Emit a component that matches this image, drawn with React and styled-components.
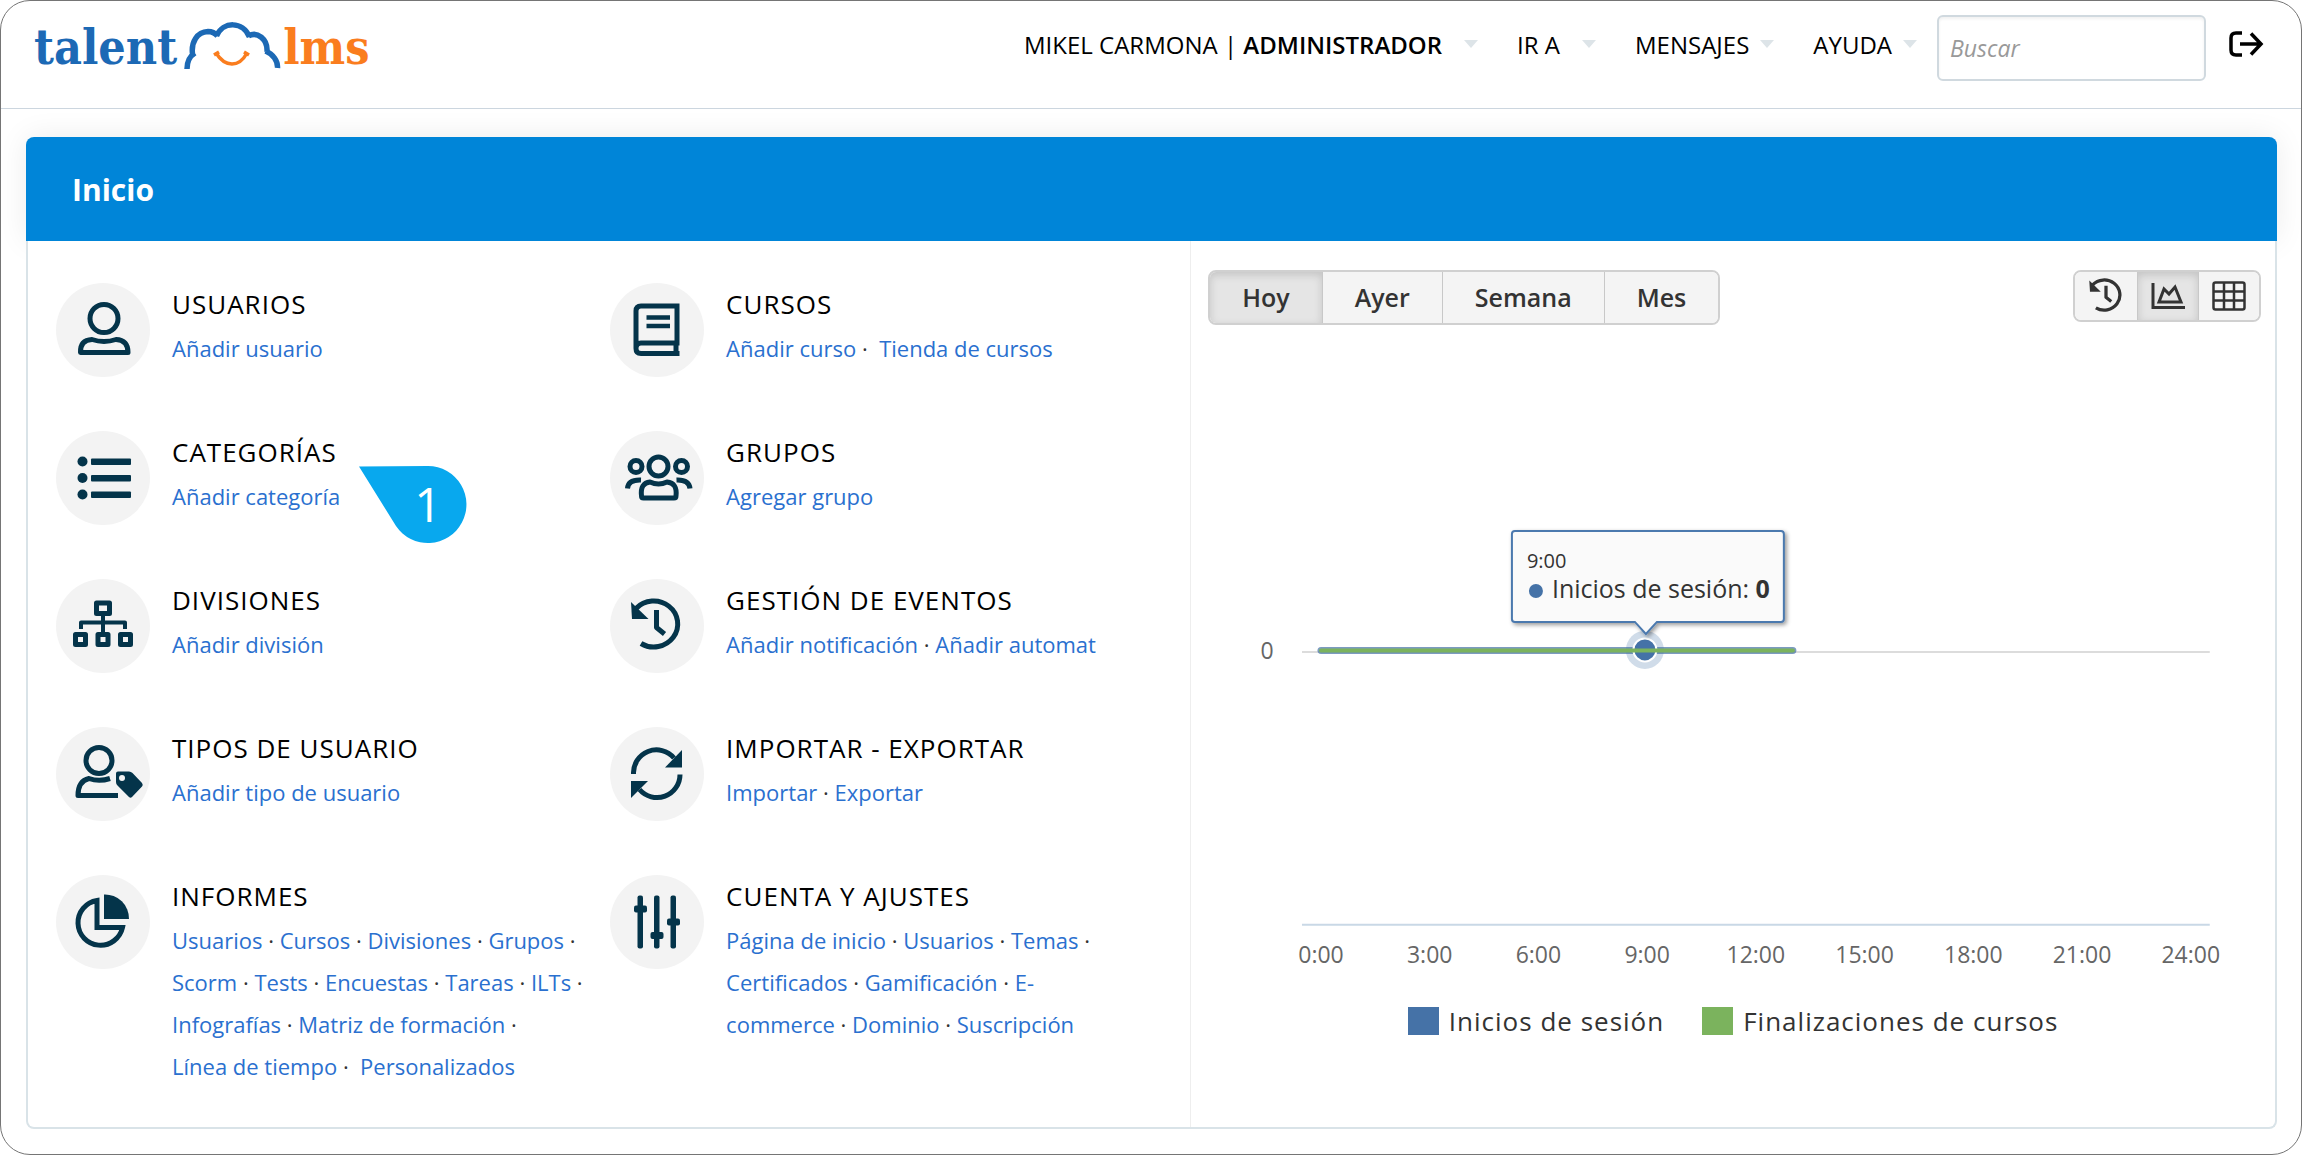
import React from 'react'
import styled, { createGlobalStyle } from 'styled-components'

const GlobalStyle = createGlobalStyle`
  * {
    box-sizing: border-box;
  }
  body {
    margin: 0;
    background: #ffffff;
    color: #333333;
    font-family: 'Open Sans', 'Noto Sans', sans-serif;
  }
  button, input {
    font-family: inherit;
  }
`

const Page = styled.div`
  display: flex;
  flex-direction: column;
  min-height: 100vh;
  border: 1px solid #757575;
  border-radius: 30px;
`

const TopBar = styled.header`
  display: flex;
  align-items: flex-start;
  justify-content: space-between;
  height: 108px;
  padding: 14px 37px 0 33px;
  border-bottom: 1px solid #ccd6df;
`

const Logo = styled.a`
  display: flex;
  align-items: flex-start;
  font-family: 'DejaVu Serif Condensed', 'DejaVu Serif', serif;
  font-size: 48px;
  font-weight: bold;
  line-height: 64px;
  color: #1c69b5;
  text-decoration: none;
`

const LogoCloud = styled.svg`
  width: 98px;
  height: 48px;
  margin: 7px 2px 0 6px;
`

const LogoAccent = styled.span`
  color: #fa7d1e;
`

const TopNav = styled.nav`
  display: flex;
  align-items: flex-start;
`

const NavButton = styled.button`
  display: flex;
  align-items: center;
  gap: ${props => (props.$tight ? '11px' : '22px')};
  height: 58px;
  margin-right: ${props => (props.$last ? '20px' : '39px')};
  padding: 0;
  border: 0;
  background: none;
  color: #000000;
  font-size: 24px;
  white-space: nowrap;
  cursor: pointer;
  strong {
    font-weight: 600;
  }
`

const Caret = styled.span`
  border: 7px solid transparent;
  border-top: 8px solid #dde4e8;
  border-bottom: 0;
`

const SearchInput = styled.input`
  width: 269px;
  height: 66px;
  padding: 0 11px;
  border: 2px solid #d0d9df;
  border-radius: 6px;
  box-shadow: inset 0 2px 3px rgba(0, 0, 0, 0.06);
  font-size: 23px;
  &::placeholder {
    color: #999999;
    font-style: italic;
  }
`

const IconButton = styled.button`
  display: flex;
  margin: 14px 0 0 22px;
  padding: 0;
  border: 0;
  background: none;
  cursor: pointer;
`

const Main = styled.main`
  flex: 1;
  padding: 28px 24px 24px 25px;
`

const Card = styled.section`
  border-radius: 8px;
`

const CardHeader = styled.div`
  display: flex;
  align-items: center;
  height: 104px;
  padding: 0 46px;
  background: #0085d8;
  border-radius: 8px 8px 0 0;
  box-shadow: 0 0 30px rgba(0, 0, 0, 0.08);
  h1 {
    margin: 0;
    color: #ffffff;
    font-size: 30px;
    font-weight: 700;
  }
`

const CardBody = styled.div`
  position: relative;
  display: grid;
  grid-template-columns: 15fr 14fr;
  background: #ffffff;
  border: 2px solid #d9e3e8;
  border-top: 0;
  border-radius: 0 0 8px 8px;
`

const ItemGrid = styled.div`
  display: grid;
  grid-template-columns: 1fr 1fr;
  padding: 42px 26px 40px 28px;
`

const ItemBox = styled.div`
  position: relative;
  display: flex;
  gap: 22px;
  min-height: 148px;
`

const ItemIcon = styled.div`
  display: flex;
  flex: none;
  align-items: center;
  justify-content: center;
  width: 94px;
  height: 94px;
  border-radius: 50%;
  background: #f3f3f3;
  color: #04344a;
`

const ItemText = styled.div`
  width: 418px;
  h2 {
    margin: 0 0 2px;
    color: #000000;
    font-size: 26px;
    font-weight: 500;
    line-height: 42px;
    letter-spacing: 1px;
    text-transform: uppercase;
  }
  p {
    margin: 0;
    font-size: 22px;
    line-height: 42px;
  }
  a {
    color: #2a70cf;
    text-decoration: none;
  }
`

const Callout = styled.svg`
  position: absolute;
  top: 34px;
  left: 302px;
  width: 110px;
  height: 80px;
`

const ChartPanel = styled.div`
  border-left: 1px solid #eeeeee;
`

const Toolbar = styled.div`
  display: flex;
  justify-content: space-between;
  padding: 29px 14px 0 17px;
`

const ButtonGroup = styled.div`
  display: flex;
  height: ${props => props.$height}px;
  border: 2px solid #d0d0d0;
  border-radius: 8px;
  overflow: hidden;
`

const GroupButton = styled.button`
  display: flex;
  align-items: center;
  justify-content: center;
  padding: ${props => (props.$icon ? '0 13px' : '0 32px 2px')};
  border: 0;
  background: ${props => (props.$active ? '#e5e5e5' : '#f4f4f4')};
  box-shadow: ${props => (props.$active ? 'inset 0 3px 8px rgba(0, 0, 0, 0.15)' : 'none')};
  color: #333333;
  font-size: 25px;
  font-weight: 600;
  cursor: pointer;
  & + & {
    border-left: 1px solid #c8c8c8;
  }
`

const ChartSvg = styled.svg`
  display: block;
  width: 100%;
  height: auto;
  font-family: 'Open Sans', 'Noto Sans', sans-serif;
`

const Legend = styled.ul`
  display: flex;
  justify-content: center;
  gap: 38px;
  margin: 0;
  padding: 24px 0 0;
  list-style: none;
`

const LegendItem = styled.li`
  display: flex;
  align-items: center;
  gap: 10px;
  color: #333333;
  font-size: 26px;
  line-height: 36px;
  letter-spacing: 1px;
  &::before {
    content: '';
    width: 31px;
    height: 28px;
    background: ${props => props.$color};
  }
`

const stroke = {
  fill: 'none',
  stroke: 'currentColor',
  strokeWidth: 5,
  strokeLinejoin: 'round',
}

// Every item icon is drawn in the 94x94 box of its circle
const Icon = ({ children }) => (
  <svg width="94" height="94" viewBox="0 0 94 94" aria-hidden="true">
    {children}
  </svg>
)

const HistoryShape = () => (
  <>
    <path {...stroke} d="M26 29.500A24 23 0 1 1 31 64.500" />
    <path d="M21 23L22 40H38.500Z" fill="currentColor" />
    <path {...stroke} d="M46.500 31V48.500L54.500 55" />
  </>
)

const icons = {
  user: (
    <Icon>
      <circle {...stroke} cx="48" cy="35.500" r="14" />
      <path {...stroke} d="M24.500 69.500Q24 57 36 56.500Q48 60.500 60 56.500Q72 57 72 69.500Z" />
    </Icon>
  ),
  course: (
    <Icon>
      <path {...stroke} strokeLinejoin="miter" d="M26 65V28Q26 23 31 23H67V60H31Q26 60 26 65.500Q26 70.500 31 70.500H69.500M66 60V70" />
      <path {...stroke} strokeWidth="4.500" d="M36.500 34.500H60M36.500 43H60" />
    </Icon>
  ),
  category: (
    <Icon>
      <g fill="currentColor">
        {[30.5, 47, 63.5].map(y => (
          <React.Fragment key={y}>
            <circle cx="26.500" cy={y} r="5" />
            <rect x="35" y={y - 3} width="40" height="6.500" rx="1" />
          </React.Fragment>
        ))}
      </g>
    </Icon>
  ),
  group: (
    <Icon>
      <circle {...stroke} cx="48.500" cy="35.500" r="9.500" />
      <circle {...stroke} cx="26" cy="35.500" r="6" />
      <circle {...stroke} cx="71.500" cy="35.500" r="6" />
      <path {...stroke} d="M31.500 65Q30 52 40 51Q48.500 55 57 51Q67.500 52 66 65Q66 67 64 67H33.500Q31.500 67 31.500 65Z" />
      <path {...stroke} d="M17.500 57.500Q18 48.500 31 49M80 57.500Q79 48.500 66.500 49" />
    </Icon>
  ),
  division: (
    <Icon>
      <g {...stroke}>
        <rect x="40.500" y="24" width="13" height="10.500" />
        <rect x="19.500" y="55.500" width="10" height="10" />
        <rect x="42" y="55.500" width="10" height="10" />
        <rect x="64.500" y="55.500" width="10" height="10" />
        <path strokeWidth="4" d="M47 35V53M25 50V43.500H69V50" />
      </g>
    </Icon>
  ),
  event: (
    <Icon>
      <HistoryShape />
    </Icon>
  ),
  userType: (
    <Icon>
      <circle {...stroke} cx="43" cy="33.500" r="13" />
      <path {...stroke} d="M54 51.500Q43 55 33 51.500Q22 54 22 68.500H62" />
      <path d="M60 46.500Q60 44.500 62 44.500H73Q75 44.500 76.500 46L86 56Q87.500 58 86 59.500L76 70Q74.500 71.500 73 70L61.500 58.500Q60 57 60 55Z" fill="currentColor" />
      <circle cx="66" cy="51" r="3" fill="#f3f3f3" />
    </Icon>
  ),
  sync: (
    <Icon>
      <path {...stroke} d="M23.500 47A23 23 0 0 1 64 31" />
      <path {...stroke} d="M70 47.500A23 23 0 0 1 29.500 62.500" />
      <path d="M72 23V40.500H55Z" fill="currentColor" />
      <path d="M21 71V54H38Z" fill="currentColor" />
    </Icon>
  ),
  report: (
    <Icon>
      <path {...stroke} d="M41 25.500A22.500 22.500 0 1 0 66.500 52.500H41Z" strokeLinejoin="miter" />
      <path d="M48 19.500A24 24 0 0 1 73 44H48Z" fill="currentColor" />
    </Icon>
  ),
  settings: (
    <Icon>
      <g fill="currentColor">
        <rect x="27.500" y="20.500" width="5.500" height="53" rx="2" />
        <rect x="44" y="20.500" width="5.500" height="53" rx="2" />
        <rect x="60.500" y="20.500" width="5.500" height="53" rx="2" />
        <rect x="24" y="30.500" width="13" height="7" rx="2" />
        <rect x="40.500" y="57" width="13" height="7" rx="2" />
        <rect x="57" y="43.500" width="13" height="7" rx="2" />
      </g>
    </Icon>
  ),
}

const items = [
  { icon: 'user', title: 'Usuarios', links: ['Añadir usuario'] },
  { icon: 'course', title: 'Cursos', links: ['Añadir curso', 'Tienda de cursos'], wide: true },
  { icon: 'category', title: 'Categorías', links: ['Añadir categoría'], step: '1' },
  { icon: 'group', title: 'Grupos', links: ['Agregar grupo'] },
  { icon: 'division', title: 'Divisiones', links: ['Añadir división'] },
  { icon: 'event', title: 'Gestión de eventos', links: ['Añadir notificación', 'Añadir automat'] },
  { icon: 'userType', title: 'Tipos de usuario', links: ['Añadir tipo de usuario'] },
  { icon: 'sync', title: 'Importar - Exportar', links: ['Importar', 'Exportar'] },
  {
    icon: 'report',
    title: 'Informes',
    links: [
      'Usuarios', 'Cursos', 'Divisiones', 'Grupos', 'Scorm', 'Tests', 'Encuestas', 'Tareas', 'ILTs',
      'Infografías', 'Matriz de formación', 'Línea\u00a0de\u00a0tiempo', 'Personalizados',
    ],
    wide: true,
  },
  {
    icon: 'settings',
    title: 'Cuenta y ajustes',
    links: ['Página de inicio', 'Usuarios', 'Temas', 'Certificados', 'Gamificación', 'E-commerce', 'Dominio', 'Suscripción'],
  },
]

// The last link of a "wide" item has a broader gap after its dot
const separator = (index, links, wide) => {
  if (index === 0) return ''
  return wide && index === links.length - 1 ? '\u00a0· \u00a0' : '\u00a0· '
}

const Item = ({ icon, title, links, wide, step }) => (
  <ItemBox>
    <ItemIcon>{icons[icon]}</ItemIcon>
    <ItemText>
      <h2>{title}</h2>
      <p>
        {links.map((link, index) => (
          <React.Fragment key={link}>
            {separator(index, links, wide)}
            <a href="#">{link}</a>
          </React.Fragment>
        ))}
      </p>
    </ItemText>
    {step && (
      <Callout viewBox="0 0 110 80">
        <path d="M1 1.500L70 1A38.500 38.500 0 1 1 38 61Z" fill="#08a8ee" />
        <text x="70" y="57" textAnchor="middle" fontSize="48" fill="#ffffff">
          {step}
        </text>
      </Callout>
    )}
  </ItemBox>
)

const hours = ['0:00', '3:00', '6:00', '9:00', '12:00', '15:00', '18:00', '21:00', '24:00']

const Chart = () => (
  <ChartSvg viewBox="0 0 1084 654" role="img" aria-label="Inicios de sesión">
    <defs>
      <filter id="tipShadow" x="-10%" y="-10%" width="120%" height="130%">
        <feDropShadow dx="2" dy="2" stdDeviation="2" floodOpacity="0.4" />
      </filter>
    </defs>
    <path d="M111 327H1019" stroke="#dcdcdc" strokeWidth="2" />
    <path d="M111 600H1019" stroke="#c9d8e6" strokeWidth="2" />
    <path d="M130 325.500H602" stroke="#4572a7" strokeWidth="7" strokeLinecap="round" opacity="0.7" />
    <circle cx="454" cy="325" r="19" fill="#4572a7" opacity="0.25" />
    <circle cx="454" cy="325" r="11.500" fill="#4572a7" stroke="#ffffff" strokeWidth="2" />
    <path d="M130 325.500H602" stroke="#7bb35d" strokeWidth="4" strokeLinecap="round" />
    <path
      d="M324 206H590Q593 206 593 209V294Q593 297 590 297H466L455 309L444 297H324Q321 297 321 294V209Q321 206 324 206Z"
      fill="#fafafa"
      stroke="#4b79ae"
      strokeWidth="2"
      filter="url(#tipShadow)"
    />
    <text x="336" y="243" fontSize="20" fill="#333333">9:00</text>
    <circle cx="345" cy="266" r="7" fill="#4572a7" />
    <text x="361" y="273" fontSize="25" fill="#333333">
      Inicios de sesión: <tspan fontWeight="700">0</tspan>
    </text>
    <g fontSize="23" fill="#666666" textAnchor="middle">
      <text x="76" y="334">0</text>
      {hours.map((hour, index) => (
        <text key={hour} x={130 + index * 108.75} y="638">
          {hour}
        </text>
      ))}
    </g>
  </ChartSvg>
)

const App = () => (
  <>
    <GlobalStyle />
    <Page>
      <TopBar>
        <Logo href="#" aria-label="talentlms">
          talent
          <LogoCloud viewBox="0 0 98 48" aria-hidden="true">
            <path
              d="M4 47C4 40 7 34 12 31M9.500 32C8 20 14 10 25 9.500C29 9.500 32 11 34.500 14M33.500 14C40 -1 60 -1 66.500 15M65.500 14C74 9 85 17 84 30M82.500 29C90 32 95 39 94.500 46"
              fill="none"
              stroke="#1c69b5"
              strokeWidth="5.500"
            />
            <path d="M33 31Q40 42 49 42Q58 42 64 31M31 33L36 30M61 30L66 33" fill="none" stroke="#fa7d1e" strokeWidth="3.500" />
          </LogoCloud>
          <LogoAccent>lms</LogoAccent>
        </Logo>
        <TopNav>
          <NavButton>
            <span>MIKEL CARMONA | <strong>ADMINISTRADOR</strong></span>
            <Caret />
          </NavButton>
          <NavButton>IR A<Caret /></NavButton>
          <NavButton $tight>MENSAJES<Caret /></NavButton>
          <NavButton $tight $last>AYUDA<Caret /></NavButton>
          <SearchInput type="search" placeholder="Buscar" aria-label="Buscar" />
          <IconButton aria-label="Salir">
            <svg width="36" height="30" viewBox="0 0 36 30" fill="none" stroke="#000000" strokeWidth="3.500">
              <path d="M14 4H8Q3 4 3 9V21Q3 26 8 26H14M12 15H33M23 4.500L33 15L23 25.500" />
            </svg>
          </IconButton>
        </TopNav>
      </TopBar>
      <Main>
        <Card>
          <CardHeader>
            <h1>Inicio</h1>
          </CardHeader>
          <CardBody>
            <ItemGrid>
              {items.map(item => (
                <Item key={item.title} {...item} />
              ))}
            </ItemGrid>
            <ChartPanel>
              <Toolbar>
                <ButtonGroup $height={55}>
                  <GroupButton $active>Hoy</GroupButton>
                  <GroupButton>Ayer</GroupButton>
                  <GroupButton>Semana</GroupButton>
                  <GroupButton>Mes</GroupButton>
                </ButtonGroup>
                <ButtonGroup $height={52}>
                  <GroupButton $icon aria-label="Historial">
                    <svg width="36" height="36" viewBox="19 19 55 55">
                      <HistoryShape />
                    </svg>
                  </GroupButton>
                  <GroupButton $icon $active aria-label="Gráfico">
                    <svg width="34" height="30" viewBox="0 0 34 30" fill="none" stroke="currentColor" strokeWidth="3">
                      <path d="M2 2V26.500H34M8 21L13 8L18 13L24 6L30 21Z" />
                    </svg>
                  </GroupButton>
                  <GroupButton $icon aria-label="Tabla">
                    <svg width="34" height="30" viewBox="0 0 34 30" fill="none" stroke="currentColor" strokeWidth="2.500">
                      <rect x="1.500" y="1.500" width="31" height="27" rx="2" />
                      <path d="M12 1V29M22 1V29M1 10.500H33M1 19.500H33" />
                    </svg>
                  </GroupButton>
                </ButtonGroup>
              </Toolbar>
              <Chart />
              <Legend>
                <LegendItem $color="#4572a7">Inicios de sesión</LegendItem>
                <LegendItem $color="#7bb35d">Finalizaciones de cursos</LegendItem>
              </Legend>
            </ChartPanel>
          </CardBody>
        </Card>
      </Main>
    </Page>
  </>
)

export default App
